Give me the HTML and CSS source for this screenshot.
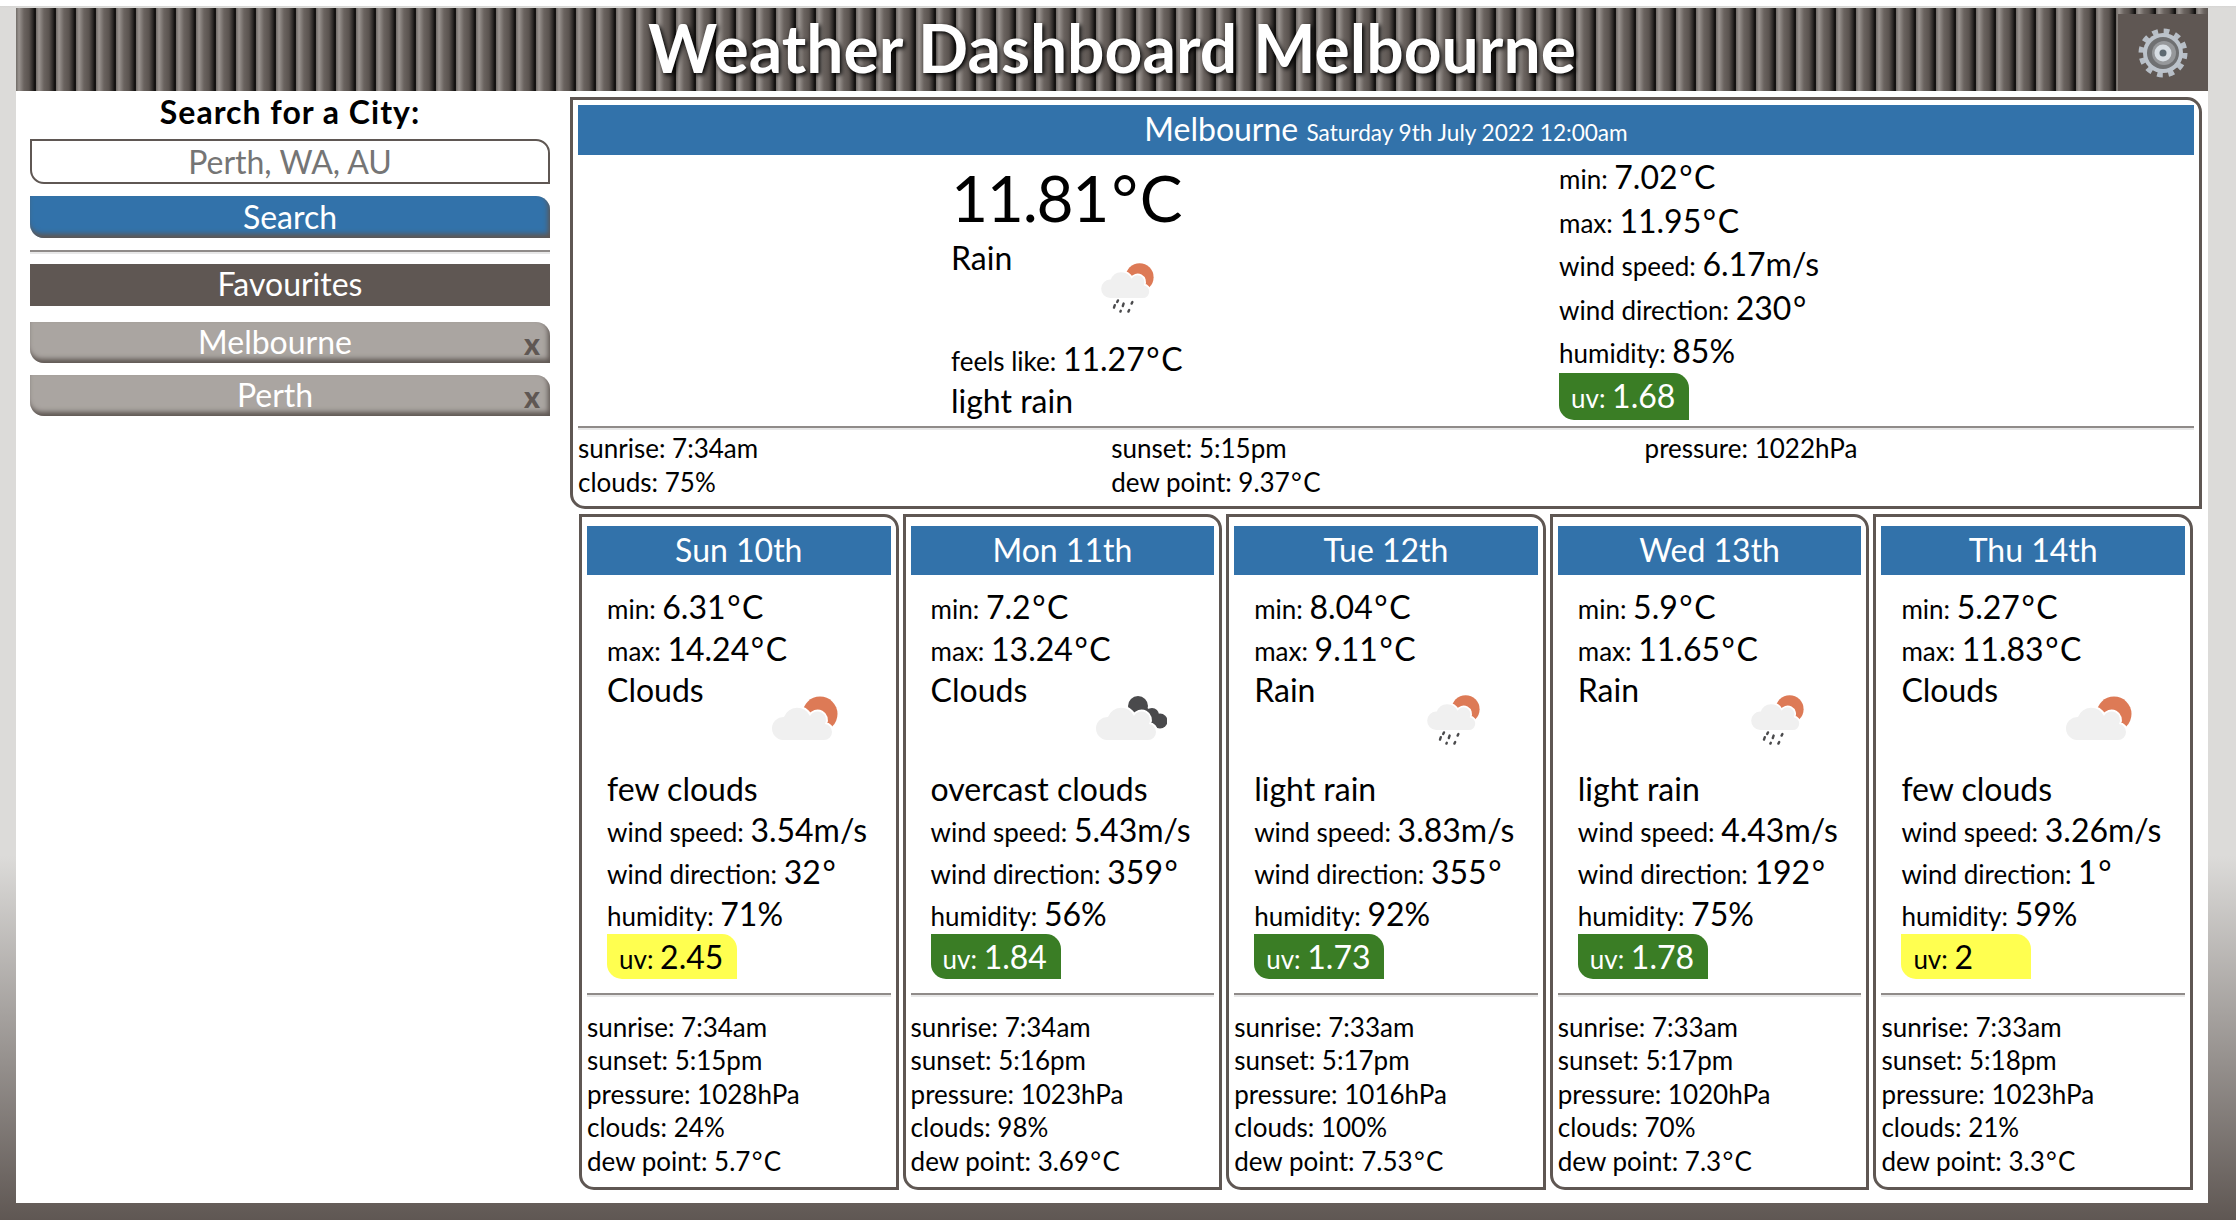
FILE: index.html
```html
<!DOCTYPE html>
<html lang="en">
<head>
    <meta charset="UTF-8">
    <title>Weather Dashboard</title>
    <link rel="stylesheet" href="styles.css">
</head>
<body>
    <svg class="defs" width="0" height="0">
        <symbol id="cloud" viewBox="0 0 80 80">
            <path class="halo" d="M20 50H61A8 8 0 0 0 69 42A8 8 0 0 0 62 34A8 8 0 0 0 47 26A14 14 0 0 0 21 27A11.5 11.5 0 0 0 20 50Z"/>
            <path class="puff" d="M20 50H61A8 8 0 0 0 69 42A8 8 0 0 0 62 34A8 8 0 0 0 47 26A14 14 0 0 0 21 27A11.5 11.5 0 0 0 20 50Z"/>
        </symbol>
        <symbol id="sunny" viewBox="0 0 80 80">
            <circle class="sun" cx="57" cy="24" r="17.5"/>
            <use href="#cloud" width="80" height="80"/>
        </symbol>
        <symbol id="overcast" viewBox="0 0 80 80">
            <circle class="dark" cx="51" cy="16" r="10"/>
            <circle class="dark" cx="65" cy="25" r="7"/>
            <circle class="dark" cx="73" cy="31" r="7.5"/>
            <path class="dark" d="M44 10L76 26L66 40L44 32Z"/>
            <use href="#cloud" width="80" height="80"/>
        </symbol>
        <symbol id="rainy" viewBox="0 0 80 80">
            <use href="#sunny" width="80" height="80"/>
            <path class="rain" d="M30 53L29 55M26 59L25 62M37 57L36 60M48 55L47 57M33.500 66L33 67M44 65L43 67"/>
        </symbol>
    </svg>

    <div class="page">
        <header class="topbar">
            <h1>Weather Dashboard Melbourne</h1>
            <button class="settings" type="button" aria-label="Settings">
                <svg width="52" height="52" viewBox="0 0 52 52">
                    <circle class="gear-teeth" cx="26" cy="26" r="21"/>
                    <circle class="gear-body" cx="26" cy="26" r="20"/>
                    <circle class="gear-ring" cx="26" cy="26" r="16"/>
                    <circle class="gear-ring2" cx="27" cy="26" r="12"/>
                    <circle class="gear-hub" cx="26" cy="26" r="8.500"/>
                    <circle class="gear-hole" cx="26" cy="26" r="3.500"/>
                </svg>
            </button>
        </header>

        <div class="content">
            <aside class="sidebar">
                <label class="search-label" for="city">Search for a City:</label>
                <input class="search-input" id="city" type="text" placeholder="Perth, WA, AU">
                <button class="btn btn-search" type="button">Search</button>
                <hr class="rule">
                <div class="fav-title">Favourites</div>
                <div class="btn btn-fav"><span class="fav-name">Melbourne</span><span class="fav-x">x</span></div>
                <div class="btn btn-fav"><span class="fav-name">Perth</span><span class="fav-x">x</span></div>
            </aside>

            <main class="results">
                <section class="panel">
                    <h2 class="heading"><span>Melbourne</span> <small>Saturday 9th July 2022 12:00am</small></h2>
                    <div class="today">
                        <div class="today-main">
                            <div class="temp">11.81<i class="deg">°</i>C</div>
                            <div class="today-weather">
                                <div class="today-desc">Rain</div>
                                <svg class="icon-today"><use href="#rainy"/></svg>
                            </div>
                            <div class="row">feels like: <b>11.27<i class="deg">°</i>C</b></div>
                            <div class="row big">light rain</div>
                        </div>
                        <div class="today-side">
                            <div class="row">min: <b>7.02<i class="deg">°</i>C</b></div>
                            <div class="row">max: <b>11.95<i class="deg">°</i>C</b></div>
                            <div class="row">wind speed: <b>6.17m/s</b></div>
                            <div class="row">wind direction: <b>230<i class="deg">°</i></b></div>
                            <div class="row">humidity: <b>85%</b></div>
                            <div class="uv uv-low">uv: <b>1.68</b></div>
                        </div>
                    </div>
                    <hr class="rule">
                    <div class="today-extra">
                        <div>sunrise: 7:34am</div>
                        <div>sunset: 5:15pm</div>
                        <div>pressure: 1022hPa</div>
                        <div>clouds: 75%</div>
                        <div>dew point: 9.37<i class="deg">°</i>C</div>
                    </div>
                </section>

                <section class="forecast">
                    <article class="card">
                        <h3 class="heading">Sun 10th</h3>
                        <div class="card-body">
                            <div class="row">min: <b>6.31<i class="deg">°</i>C</b></div>
                            <div class="row">max: <b>14.24<i class="deg">°</i>C</b></div>
                            <div class="weather">
                                <div class="weather-name">Clouds</div>
                                <svg class="icon"><use href="#sunny"/></svg>
                            </div>
                            <div class="row big">few clouds</div>
                            <div class="row">wind speed: <b>3.54m/s</b></div>
                            <div class="row">wind direction: <b>32<i class="deg">°</i></b></div>
                            <div class="row">humidity: <b>71%</b></div>
                            <div class="uv uv-mid">uv: <b>2.45</b></div>
                        </div>
                        <hr class="rule">
                        <div class="extra">
                            <div>sunrise: 7:34am</div>
                            <div>sunset: 5:15pm</div>
                            <div>pressure: 1028hPa</div>
                            <div>clouds: 24%</div>
                            <div>dew point: 5.7<i class="deg">°</i>C</div>
                        </div>
                    </article>

                    <article class="card">
                        <h3 class="heading">Mon 11th</h3>
                        <div class="card-body">
                            <div class="row">min: <b>7.2<i class="deg">°</i>C</b></div>
                            <div class="row">max: <b>13.24<i class="deg">°</i>C</b></div>
                            <div class="weather">
                                <div class="weather-name">Clouds</div>
                                <svg class="icon"><use href="#overcast"/></svg>
                            </div>
                            <div class="row big">overcast clouds</div>
                            <div class="row">wind speed: <b>5.43m/s</b></div>
                            <div class="row">wind direction: <b>359<i class="deg">°</i></b></div>
                            <div class="row">humidity: <b>56%</b></div>
                            <div class="uv uv-low">uv: <b>1.84</b></div>
                        </div>
                        <hr class="rule">
                        <div class="extra">
                            <div>sunrise: 7:34am</div>
                            <div>sunset: 5:16pm</div>
                            <div>pressure: 1023hPa</div>
                            <div>clouds: 98%</div>
                            <div>dew point: 3.69<i class="deg">°</i>C</div>
                        </div>
                    </article>

                    <article class="card">
                        <h3 class="heading">Tue 12th</h3>
                        <div class="card-body">
                            <div class="row">min: <b>8.04<i class="deg">°</i>C</b></div>
                            <div class="row">max: <b>9.11<i class="deg">°</i>C</b></div>
                            <div class="weather">
                                <div class="weather-name">Rain</div>
                                <svg class="icon icon-rain"><use href="#rainy"/></svg>
                            </div>
                            <div class="row big">light rain</div>
                            <div class="row">wind speed: <b>3.83m/s</b></div>
                            <div class="row">wind direction: <b>355<i class="deg">°</i></b></div>
                            <div class="row">humidity: <b>92%</b></div>
                            <div class="uv uv-low">uv: <b>1.73</b></div>
                        </div>
                        <hr class="rule">
                        <div class="extra">
                            <div>sunrise: 7:33am</div>
                            <div>sunset: 5:17pm</div>
                            <div>pressure: 1016hPa</div>
                            <div>clouds: 100%</div>
                            <div>dew point: 7.53<i class="deg">°</i>C</div>
                        </div>
                    </article>

                    <article class="card">
                        <h3 class="heading">Wed 13th</h3>
                        <div class="card-body">
                            <div class="row">min: <b>5.9<i class="deg">°</i>C</b></div>
                            <div class="row">max: <b>11.65<i class="deg">°</i>C</b></div>
                            <div class="weather">
                                <div class="weather-name">Rain</div>
                                <svg class="icon icon-rain"><use href="#rainy"/></svg>
                            </div>
                            <div class="row big">light rain</div>
                            <div class="row">wind speed: <b>4.43m/s</b></div>
                            <div class="row">wind direction: <b>192<i class="deg">°</i></b></div>
                            <div class="row">humidity: <b>75%</b></div>
                            <div class="uv uv-low">uv: <b>1.78</b></div>
                        </div>
                        <hr class="rule">
                        <div class="extra">
                            <div>sunrise: 7:33am</div>
                            <div>sunset: 5:17pm</div>
                            <div>pressure: 1020hPa</div>
                            <div>clouds: 70%</div>
                            <div>dew point: 7.3<i class="deg">°</i>C</div>
                        </div>
                    </article>

                    <article class="card">
                        <h3 class="heading">Thu 14th</h3>
                        <div class="card-body">
                            <div class="row">min: <b>5.27<i class="deg">°</i>C</b></div>
                            <div class="row">max: <b>11.83<i class="deg">°</i>C</b></div>
                            <div class="weather">
                                <div class="weather-name">Clouds</div>
                                <svg class="icon"><use href="#sunny"/></svg>
                            </div>
                            <div class="row big">few clouds</div>
                            <div class="row">wind speed: <b>3.26m/s</b></div>
                            <div class="row">wind direction: <b>1<i class="deg">°</i></b></div>
                            <div class="row">humidity: <b>59%</b></div>
                            <div class="uv uv-mid">uv: <b>2</b></div>
                        </div>
                        <hr class="rule">
                        <div class="extra">
                            <div>sunrise: 7:33am</div>
                            <div>sunset: 5:18pm</div>
                            <div>pressure: 1023hPa</div>
                            <div>clouds: 21%</div>
                            <div>dew point: 3.3<i class="deg">°</i>C</div>
                        </div>
                    </article>
                </section>
            </main>
        </div>
    </div>
</body>
</html>
```

FILE: styles.css
```css
*{
    box-sizing: border-box;
}
html
{
    background-color: #ffffff;
}
body
{
    margin: 6px 0 0 0;
    height: 1214px;
    padding: 2px 28px 17px 16px;
    overflow: hidden;
    font-family: Lato, "Noto Sans", sans-serif;
    font-size: 26px;
    color: #000000;
    background: linear-gradient(#d6d5d3 0, #dcdbd9 2px, #dcdbd9 70%, #5f5753 100%);
}
.defs
{
    position: absolute;
}
.page
{
    height: 100%;
    background-color: #ffffff;
}
.deg
{
    font-style: normal;
    margin: 0 .05em;
}

/* header */
.topbar
{
    height: 83px;
    display: flex;
    justify-content: flex-end;
    background: repeating-linear-gradient(90deg, #6f6a66 0, #9a9490 3px, #6a635f 8px, #5a534f 13px, #2a2725 17px, #0c0b0a 19px, #1a1817 20px);
}
.topbar h1
{
    flex: 1;
    margin: 0;
    padding-left: 90px;
    text-align: center;
    font-size: 66px;
    line-height: 80px;
    font-weight: 700;
    color: #ffffff;
    text-shadow: 2px 2px 4px #000000;
}
.settings
{
    width: 90px;
    height: 77px;
    margin-top: 6px;
    padding: 0;
    border: 0;
    display: flex;
    align-items: center;
    justify-content: center;
    background-color: #5f5753;
}
.gear-teeth
{
    fill: none;
    stroke: #b7bec6;
    stroke-width: 7;
    stroke-dasharray: 5.500 5.496;
}
.gear-body
{
    fill: #bcc3cb;
}
.gear-ring
{
    fill: #6f7072;
}
.gear-ring2
{
    fill: #96989b;
}
.gear-hub
{
    fill: #d7dde3;
}
.gear-hole
{
    fill: #5e6a72;
}

.content
{
    display: flex;
}

/* left column */
.sidebar
{
    width: 554px;
    padding: 0 20px 0 14px;
    display: flex;
    flex-direction: column;
    font-size: 32px;
}
.search-label
{
    height: 48px;
    line-height: 42px;
    text-align: center;
    font-weight: 700;
    letter-spacing: 1px;
}
.search-input
{
    width: 100%;
    height: 45px;
    padding: 0;
    text-align: center;
    font: inherit;
    border: 2px solid #5f5753;
    border-radius: 0 14px 0 14px;
}
.search-input::placeholder
{
    color: #757575;
    opacity: 1;
}
.btn
{
    width: 100%;
    padding: 0;
    border: 0;
    border-radius: 0 14px 0 14px;
    color: #ffffff;
    font: inherit;
    text-align: center;
}
.btn-search
{
    height: 42px;
    margin-top: 12px;
    line-height: 38px;
    background-color: #3272aa;
    box-shadow: inset -2px -4px 5px #5f5753;
}
.rule
{
    width: 100%;
    height: 4px;
    margin: 0;
    border: 0;
    border-top: 2px solid #8f8b89;
    border-bottom: 2px solid #e8e8e8;
}
.sidebar .rule
{
    margin: 12px 0 10px;
}
.fav-title
{
    height: 42px;
    line-height: 40px;
    text-align: center;
    color: #ffffff;
    background-color: #5f5753;
}
.btn-fav
{
    height: 41px;
    margin-top: 12px;
    display: flex;
    line-height: 40px;
    background-color: #aaa5a1;
    box-shadow: inset -2px -4px 5px #5f5753;
}
.fav-title + .btn-fav
{
    margin-top: 16px;
}
.fav-name
{
    flex: 1;
}
.fav-x
{
    width: 30px;
    padding-right: 6px;
    font-size: 30px;
    line-height: 42px;
    font-weight: 900;
    color: #5f5753;
}

/* right column */
.results
{
    flex: 1;
    padding: 6px 6px 0 0;
}
.panel, .card
{
    border: 3px solid #5f5753;
    border-radius: 0 15px 0 15px;
}
.panel
{
    padding: 5px 5px 7px;
}
.heading
{
    margin: 0;
    height: 50px;
    line-height: 48px;
    text-align: center;
    font-size: 32px;
    font-weight: 400;
    color: #ffffff;
    background-color: #3272aa;
}
.heading small
{
    font-size: 22.600px;
}
.today
{
    height: 266px;
    display: grid;
    grid-template-columns: 373px 608px 1fr;
}
.today-main
{
    grid-column: 2;
}
.today-side
{
    grid-column: 3;
}
.temp
{
    height: 85px;
    line-height: 85px;
    font-size: 64px;
    letter-spacing: -.02em;
}
.today-weather
{
    height: 98px;
    display: flex;
}
.today-desc
{
    width: 143px;
    font-size: 32px;
    line-height: 36px;
}
.icon-today
{
    width: 64px;
    height: 64px;
    margin-top: 18px;
}
.row
{
    height: 43.600px;
    line-height: 43.600px;
    white-space: nowrap;
}
.today-main .row
{
    height: 42px;
    line-height: 42px;
}
.row b
{
    font-size: 32px;
    font-weight: 400;
}
.row.big
{
    font-size: 32px;
}
.uv
{
    width: 130px;
    height: 47px;
    margin-top: 0;
    padding-left: 12px;
    line-height: 46px;
    border-radius: 0 15px 0 15px;
}
.uv b
{
    font-size: 32px;
    font-weight: 400;
}
.uv-low
{
    color: #ffffff;
    background-color: #3a7d25;
}
.uv-mid
{
    color: #000000;
    background-color: #ffff50;
}
.today-extra
{
    padding-top: 2px;
    display: grid;
    grid-template-columns: repeat(3, 533.300px);
    line-height: 33.500px;
}
.panel .rule
{
    margin-top: 5px;
}

/* five day forecast */
.forecast
{
    margin-top: 5px;
    display: flex;
    gap: 4px;
    padding: 0 9px;
}
.card
{
    flex: 1;
    padding: 9px 5px 0;
    height: 676px;
}
.card .heading
{
    height: 49px;
}
.card-body
{
    padding: 11px 0 0 20px;
}
.card .row
{
    height: 41.800px;
    line-height: 41.800px;
}
.card .uv
{
    height: 45px;
    margin-top: -1px;
    line-height: 45px;
}
.weather
{
    height: 98px;
    display: flex;
}
.weather-name
{
    width: 156px;
    font-size: 32px;
    line-height: 39px;
}
.icon
{
    width: 80px;
    height: 80px;
    margin-top: 20px;
}
.icon-rain
{
    width: 64px;
    height: 64px;
    margin-left: 10px;
}
.card .rule
{
    margin-top: 14px;
}
.extra
{
    margin-top: 14px;
    line-height: 33.500px;
}

/* weather icon colours */
.sun
{
    fill: #dd7a56;
}
.dark
{
    fill: #4a4a4c;
}
.halo
{
    fill: #ffffff;
    stroke: #ffffff;
    stroke-width: 4;
}
.puff
{
    fill: #f0f0f0;
}
.rain
{
    fill: none;
    stroke: #4a4a4c;
    stroke-width: 3;
    stroke-linecap: round;
}
```
